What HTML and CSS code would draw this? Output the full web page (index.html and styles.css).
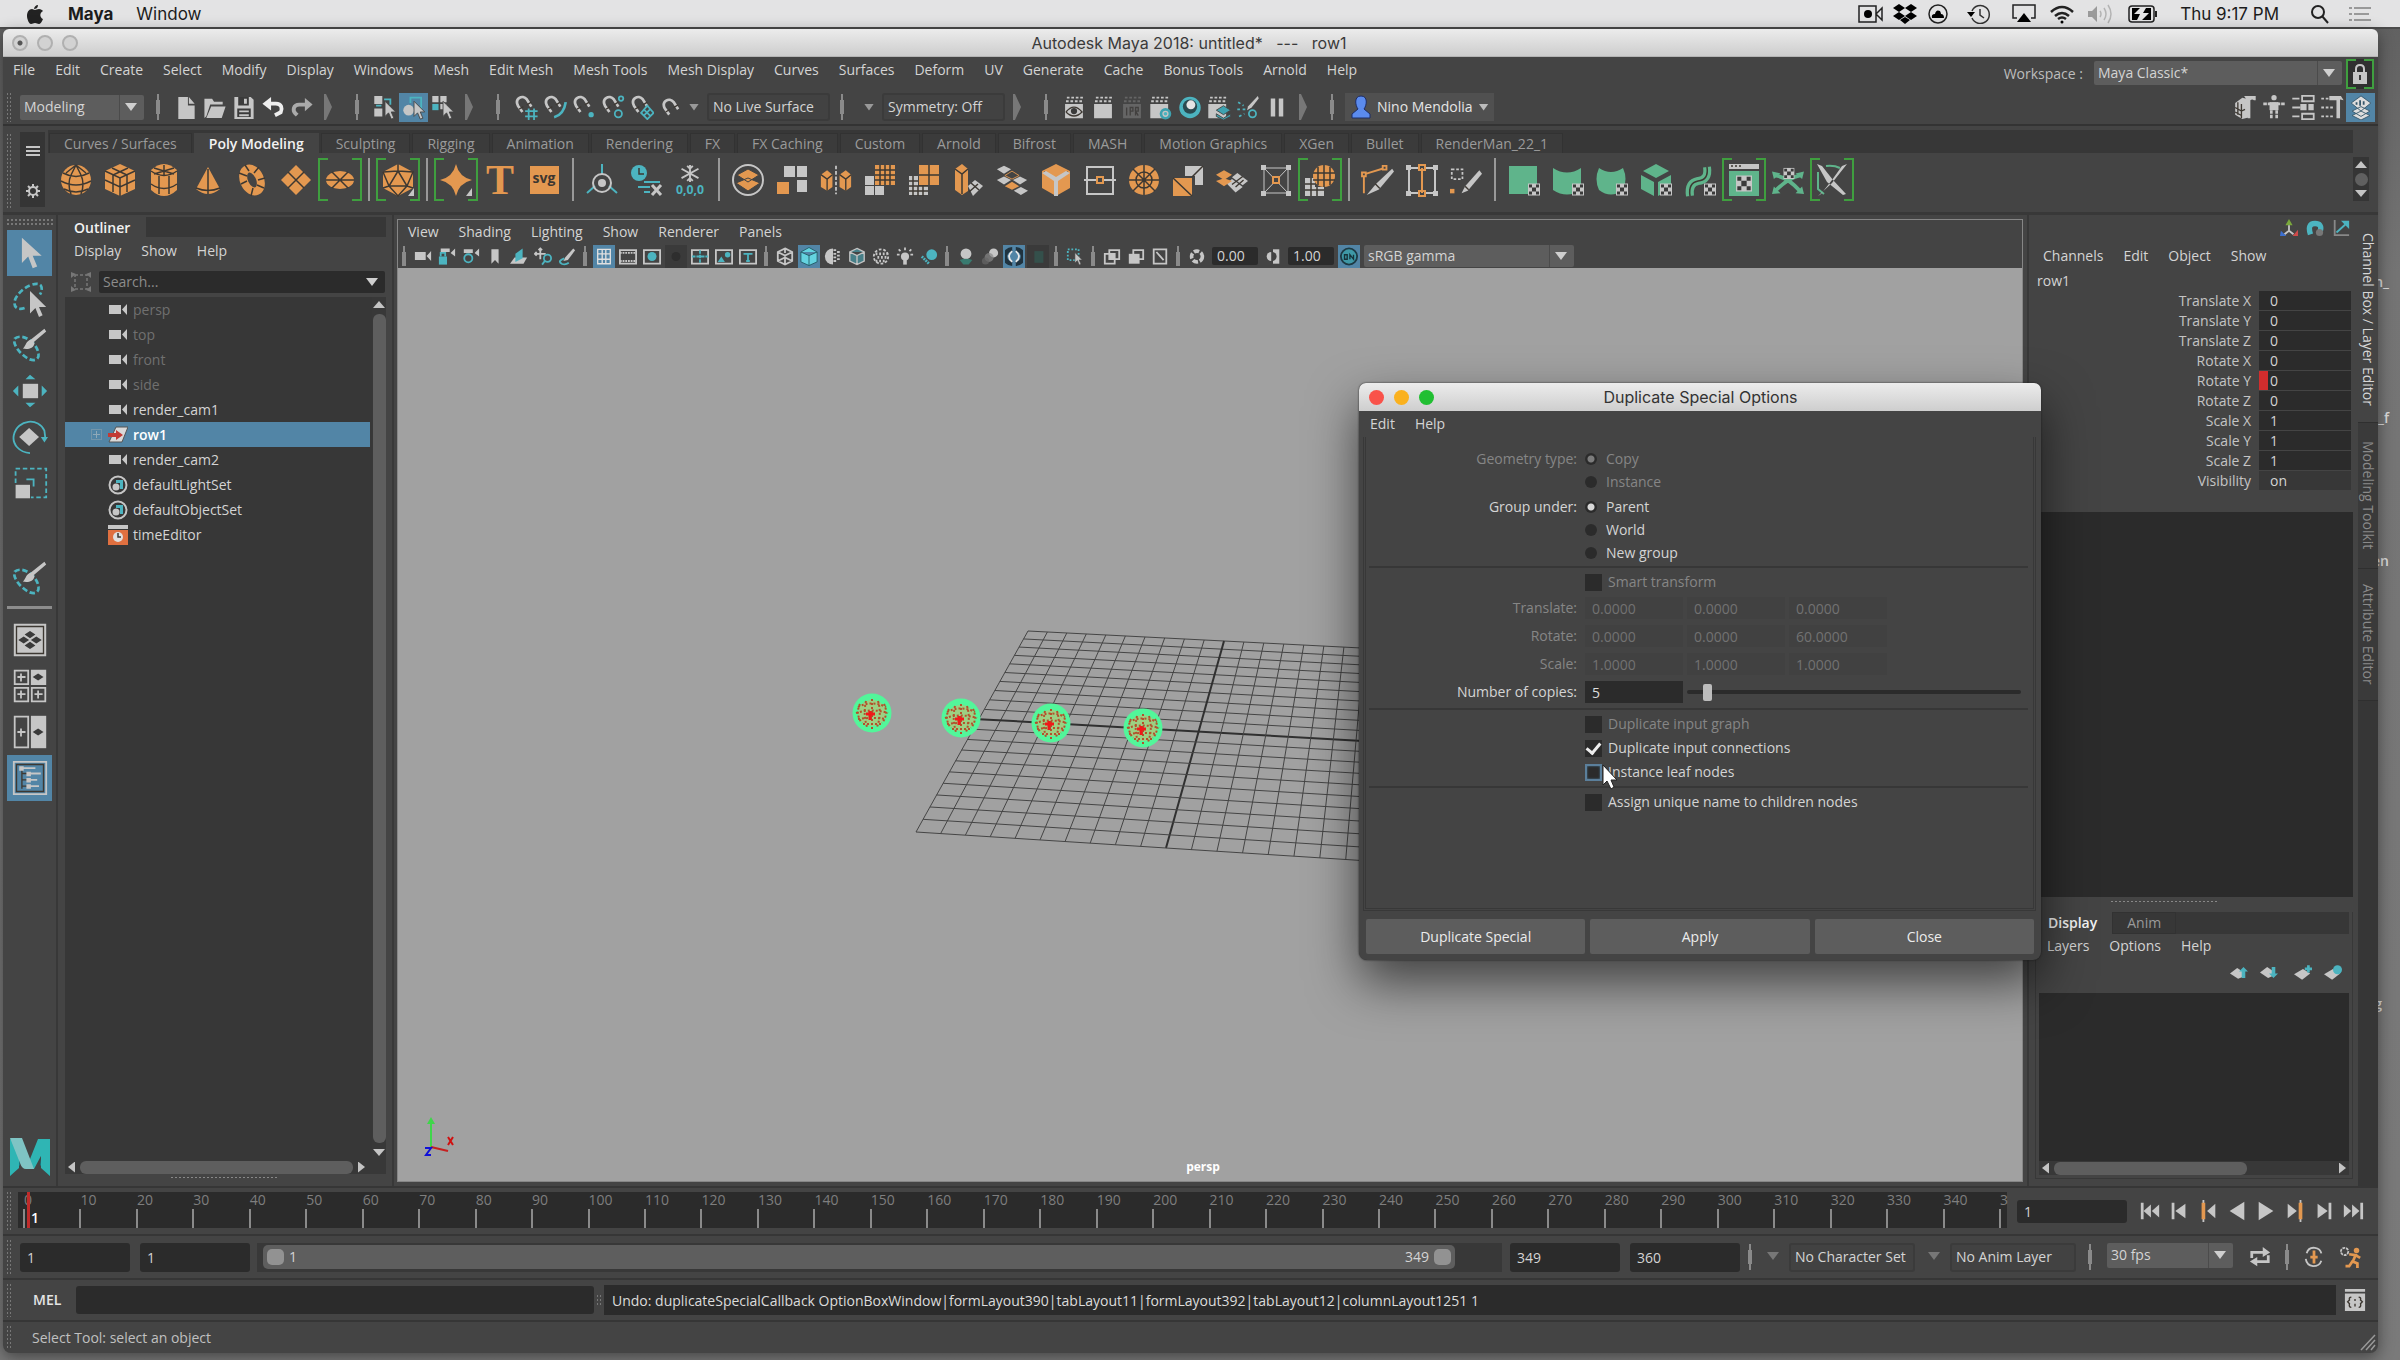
FILE: index.html
```html
<!DOCTYPE html>
<html lang="en">
<head>
<meta charset="utf-8">
<title>Autodesk Maya 2018</title>
<link rel="stylesheet" href="styles.css">
</head>
<body>
<svg class="defs" aria-hidden="true">
  <symbol id="chk" viewBox="0 0 12 12"><path class="fg" d="M0 0h12v12H0z"/><path class="fd" d="M1 1h3v3H1zM8 1h3v3H8zM4 4h4v4H4zM1 8h3v3H1zM8 8h3v3H8z"/></symbol>
  <symbol id="cam" viewBox="0 0 20 20"><path class="fg" d="M1 5h12v9H1zM19 4v11l-5-5.500z"/></symbol>
  <symbol id="set" viewBox="0 0 20 20"><circle class="sg" cx="10" cy="10" r="8.500"/><path class="ft" d="M8 5h7v9h-3V8H8z"/><circle class="fg" cx="8" cy="12" r="3.500"/></symbol>
  <symbol id="clap" viewBox="0 0 22 28"><path class="fg" d="M1 10h20v16H1z"/><path class="sg" stroke-dasharray="3 2" d="M2 7h19M3 3h19"/></symbol>
  <symbol id="mag" viewBox="0 0 26 28"><path class="sg w3" d="M9 19L4 12C0 4 9-1 14 5l5 8"/><path class="sd" d="M5 16l5-3M14 11l5-3"/></symbol>
  <symbol id="ptr" viewBox="0 0 14 22"><path class="fg" stroke="#444" d="M1 1v17l4-4 3 7 3-1-3-7h5z"/></symbol>
  <symbol id="lasso" viewBox="0 0 40 40"><path class="st w3" stroke-dasharray="6 3" d="M3 13c5-5 17-1 23 8 7 11 3 18-6 15C10 32 0 19 3 13z"/><path class="fg" d="M36 2l2 3-14 12-3-3zM22 14l3 4c-1 6-7 7-13 6 4-3 3-9 10-10z"/></symbol>
  <symbol id="ball" viewBox="0 0 40 40"><circle cx="20" cy="20" r="19.500" fill="#52f69a"/><ellipse cx="20" cy="20" rx="14" ry="13" fill="#d8b070" opacity=".55"/><g fill="none" stroke="#b4502c" stroke-width="2" stroke-dasharray="2 2"><path d="M20 6v30M14 8q-3 13 1 26M26 8q4 13-1 26M8 11q-5 10 2 19M32 11q5 10-2 19"/><path d="M6 14q14-7 28 0M4 20q16-5 32 0M6 26q14-2 28 0M11 31h18"/></g><path d="M14 21h9M18 18v9" stroke="#f01818" stroke-width="3"/></symbol>
</svg>

<header class="macbar">
  <svg class="apple" viewBox="0 0 18 20"><path d="M12 1c0 3-2 4-4 4 0-2 2-4 4-4zM9 6c1 0 2-1 4-1 2 0 3 1 4 2-4 2-3 7 0 8-1 3-3 5-4 5-2 0-2-1-4-1s-2 1-4 1C3 20 1 15 1 12c0-4 2-7 5-7 1 0 2 1 3 1z"/></svg>
  <button class="mac-app">Maya</button><button class="mac-menu">Window</button>
  <div class="mac-status">
    <svg viewBox="0 0 26 20" width="26" height="20"><path d="M1 2h17v16H1zM18 10l6-6v12z" fill="none" stroke="#222" stroke-width="1.500"/><circle cx="10" cy="10" r="4"/></svg>
    <svg class="s2" viewBox="0 0 24 20" width="24" height="20"><path d="M6 0l6 4-6 4-6-4zM18 0l6 4-6 4-6-4zM6 8l6 4-6 4-6-4zM18 8l6 4-6 4-6-4zM12 13l5 3-5 4-5-4z"/></svg>
    <svg class="s3" viewBox="0 0 22 20" width="22" height="20"><circle cx="11" cy="10" r="9" fill="none" stroke="#222" stroke-width="1.500"/><path d="M5 14q-1-4 3-4 1-5 5-3 1 2 1 3 3 0 3 4z"/></svg>
    <svg class="s4" viewBox="0 0 24 20" width="24" height="20"><path d="M5 7a9 9 0 1 1 0 7M13 5v6l4 3" fill="none" stroke="#333" stroke-width="1.500"/><path d="M0 8h8l-4 5z"/></svg>
    <svg class="s5" viewBox="0 0 24 20" width="24" height="20"><path d="M5 14H1V1h22v13h-4" fill="none" stroke="#222" stroke-width="1.500"/><path d="M12 9l7 9H5z"/></svg>
    <svg class="s6" viewBox="0 0 26 20" width="26" height="20"><path d="M2 8Q13-2 24 8M6 12q7-6 14 0M9 15q4-3 8 0" fill="none" stroke="#222" stroke-width="2.500"/><circle cx="13" cy="18" r="1.500"/></svg>
    <svg class="s7" viewBox="0 0 26 20" width="26" height="20"><path d="M1 7h4l5-5v16l-5-5H1z" fill="#9a9a9a"/><path d="M13 7q2 3 0 6M17 4q4 6 0 12M21 1q6 9 0 18" fill="none" stroke="#b4b4b4" stroke-width="1.500"/></svg>
    <svg class="s8" viewBox="0 0 30 20" width="30" height="20"><rect x="1" y="2" width="25" height="16" rx="3" fill="none" stroke="#222" stroke-width="1.500"/><path d="M4 4h8l-6 6h6l-3 6H4zM23 16h-9l7-7h-6l3-5h5z"/><path d="M28 7v6" stroke="#222" stroke-width="2"/></svg>
    <span class="clock">Thu 9:17 PM</span>
    <svg class="s9" viewBox="0 0 20 20" width="20" height="20"><circle cx="8" cy="8" r="6" fill="none" stroke="#222" stroke-width="2"/><path d="M12 12l6 7" stroke="#222" stroke-width="2"/></svg>
    <svg class="s10" viewBox="0 0 24 20" width="24" height="20"><path d="M1 4h3M6 4h17M1 10h3M6 10h15M1 16h3M6 16h17" stroke="#999" stroke-width="2"/></svg>
  </div>
</header>

<aside class="desktop-labels"><span class="d1">n_</span><span class="d2">_f</span><span class="d3">en</span><span class="d4">g</span></aside>

<main class="app">
  <div class="titlebar"><i class="light mod"></i><i class="light"></i><i class="light"></i><h1>Autodesk Maya 2018: untitled*&nbsp;&nbsp; ---&nbsp;&nbsp; row1</h1></div>

  <div class="menurow">
    <nav class="menus main-menus"><button>File</button><button>Edit</button><button>Create</button><button>Select</button><button>Modify</button><button>Display</button><button>Windows</button><button>Mesh</button><button>Edit Mesh</button><button>Mesh Tools</button><button>Mesh Display</button><button>Curves</button><button>Surfaces</button><button>Deform</button><button>UV</button><button>Generate</button><button>Cache</button><button>Bonus Tools</button><button>Arnold</button><button>Help</button></nav>
    <label class="ws-label" for="ws">Workspace :</label>
    <span class="sel ws"><select id="ws"><option>Maya Classic*</option></select></span>
    <button class="lock br" aria-label="Lock workspace"><svg viewBox="0 0 16 22" width="16" height="22"><path class="sg" d="M4 10V6q0-4 4-4t4 4v4"/><path class="fg" d="M1 9h14v12H1z"/><path class="fd" d="M7 12h2v5H7z"/></svg></button>
  </div>

  <div class="statusline">
    <i class="grip"></i>
    <span class="sel mode"><select aria-label="Menu set"><option>Modeling</option></select></span>
    <i class="vs"></i>
    <button class="ib" aria-label="New"><svg viewBox="0 0 22 26"><path class="fg" d="M3 2h10v9h7v14H3zM14 2l6 7h-6z"/></svg></button>
    <button class="ib" aria-label="Open"><svg viewBox="0 0 24 26"><path class="fg" d="M1 24V4h8l2 3h9v3H7L3 22zM8 12h15l-4 12H3z"/></svg></button>
    <button class="ib" aria-label="Save"><svg viewBox="0 0 22 26"><path class="fg" d="M1 2h17l3 3v20H1z"/><path class="fd" d="M5 2h11v9H5zM4 14h14v9H4z"/><path class="fg" d="M11 4h3v5h-3zM6 16h10v2H6zM6 20h10v2H6z"/></svg></button>
    <button class="ib" aria-label="Undo"><svg viewBox="0 0 24 26"><path fill="none" stroke="#eee" stroke-width="4" d="M6 9h9c6 0 7 5 5 9l-6 3"/><path fill="#eee" d="M10 2v14L1 9z"/></svg></button>
    <button class="ib" aria-label="Redo"><svg viewBox="0 0 24 26"><path fill="none" stroke="#aaa" stroke-width="4" d="M18 10H9c-6 0-7 6-4 9l2 2"/><path fill="#aaa" d="M15 3v14l8-7z"/></svg></button>
    <i class="gt"></i><i class="vs"></i>
    <button class="ib" aria-label="Select hierarchy"><svg viewBox="0 0 26 28"><path class="fg" d="M1 1h9v9H1zM1 15h9v9H1z"/><path class="st" d="M12 5h7v6M3 12h6"/><use href="#ptr" x="12" y="6" width="14" height="22"/></svg></button>
    <button class="ib on" aria-label="Select object"><svg viewBox="0 0 26 28"><circle class="fg" cx="7" cy="17" r="6"/><path class="st" d="M9 9V3h12v13"/><use href="#ptr" x="12" y="6" width="14" height="22"/></svg></button>
    <button class="ib" aria-label="Select component"><svg viewBox="0 0 26 28"><path class="fg" d="M1 1h7v7H1zM10 1h7v7h-7zM10 10h7v6h-7z"/><path class="ft" d="M1 10h7v7H1z"/><use href="#ptr" x="12" y="6" width="14" height="22"/></svg></button>
    <i class="gt"></i><i class="vs"></i>
    <button class="ib" aria-label="Snap to grid"><svg viewBox="0 0 26 28"><use href="#mag"/><path class="st" d="M16 15v13M22 15v13M12 18h14M12 24h14"/></svg></button>
    <button class="ib" aria-label="Snap to curve"><svg viewBox="0 0 26 28"><use href="#mag"/><path class="st w3" d="M25 8q-2 14-13 17"/></svg></button>
    <button class="ib" aria-label="Snap to point"><svg viewBox="0 0 26 28"><use href="#mag"/><circle class="ft" cx="21" cy="22" r="3"/></svg></button>
    <button class="ib" aria-label="Snap to center"><svg viewBox="0 0 26 28"><use href="#mag"/><circle class="st" cx="19" cy="21" r="4"/><circle class="st" cx="22" cy="4" r="2.500"/></svg></button>
    <button class="ib" aria-label="Snap to plane"><svg viewBox="0 0 26 28"><use href="#mag"/><path class="st" d="M19 12l7 8-7 7-7-7zM15 16l7 7M22 16l-7 7"/></svg></button>
    <button class="ib" aria-label="Make live"><svg viewBox="0 0 26 28"><use href="#mag" x="2" y="3"/></svg></button>
    <i class="tri"></i>
    <button class="box live">No Live Surface</button>
    <i class="vs"></i><i class="tri sp"></i>
    <button class="box sym">Symmetry: Off</button>
    <i class="gt"></i><i class="vs"></i>
    <button class="ib" aria-label="Render view"><svg viewBox="0 0 22 28"><use href="#clap"/><path class="sd" d="M2 19q9-11 18 0-9 9-18 0"/><circle class="fd" cx="11" cy="18" r="3.500"/></svg></button>
    <button class="ib" aria-label="Render frame"><svg viewBox="0 0 22 28"><use href="#clap"/></svg></button>
    <button class="ib dim" aria-label="IPR render"><svg viewBox="0 0 22 28"><use href="#clap"/><path class="sd" d="M5 14v9M9 23v-9h3v4H9M15 23v-9h3v4h-3l3 5"/></svg></button>
    <button class="ib" aria-label="Render settings"><svg viewBox="0 0 26 28"><use href="#clap" x="-2"/><circle cx="18" cy="21" r="5" fill="#c4c4c4" stroke="#3ea2b0" stroke-width="3"/><circle class="ft" cx="18" cy="21" r="2"/></svg></button>
    <button class="ib" aria-label="Hypershade"><svg viewBox="0 0 26 28"><circle class="ft" cx="13" cy="14" r="12"/><circle cx="13" cy="13" r="8" fill="#2b4a50"/><circle cx="14" cy="11" r="5" fill="#e4e4e4"/></svg></button>
    <button class="ib" aria-label="Render setup"><svg viewBox="0 0 26 28"><use href="#clap" x="-2"/><path fill="#3ea2b0" stroke="#444" d="M18 12l8 5-8 5-8-5zM10 21l8 5 8-5v3l-8 4-8-4z"/></svg></button>
    <button class="ib" aria-label="Light editor"><svg viewBox="0 0 26 28"><path class="fg" d="M24 1l1 3-8 10-5 3 1-4z"/><circle class="st" cx="18" cy="21" r="4"/><path class="st" stroke-dasharray="3 3" d="M2 8l6 4M1 16h9M3 24l6-3"/></svg></button>
    <button class="ib" aria-label="Pause"><svg viewBox="0 0 22 28"><path class="fg" d="M4 4h5v20H4zM13 4h5v20h-5z"/></svg></button>
    <i class="gt"></i><i class="vs"></i>
    <button class="user"><svg viewBox="0 0 20 24" width="20" height="24"><path fill="#5b8bee" stroke="#1d2c66" d="M10 1c7 0 6 9 3 13l6 5v4H1v-4l6-5C4 10 3 1 10 1z"/></svg>Nino Mendolia<i class="tri"></i></button>
    <div class="right-tools">
      <button class="ib" aria-label="Modeling toolkit"><svg viewBox="0 0 26 28"><path class="fg" d="M2 9l8-6 8 2v20l-8 2-8-5zM12 1h13v5h-2q-2-2-4 0v20h-3V7z"/><path class="sd" d="M2 14l7 4 4-2M2 19l7 4M9 10v16M5 8v14"/></svg></button>
      <button class="ib" aria-label="Human IK"><svg viewBox="0 0 26 28"><circle class="fg" cx="13" cy="3" r="3"/><path class="fg" d="M8 8h10v9H8z"/><path class="sg w3" stroke-dasharray="4 1" d="M1 10h24M10 17v10M16 17v10"/></svg></button>
      <button class="ib" aria-label="Attribute editor"><svg viewBox="0 0 26 28"><path class="sg" d="M12 1h13v6H12zM12 21h13v6H12zM1 4h8M1 14h9M1 24h8"/><path class="fg" d="M10 10h7v7h-7zM19 10h6v7h-6z"/></svg></button>
      <button class="ib" aria-label="Tool settings"><svg viewBox="0 0 26 28"><path class="fg" d="M10 1h13l3 5-4-1v21h-4V6h-8z"/><path class="sg" stroke-dasharray="3 2" d="M1 4h8M1 14h13M1 24h13"/></svg></button>
      <button class="ib on" aria-label="Channel box"><svg viewBox="0 0 26 28"><path fill="#ddd" stroke="#35566b" d="M13 18L3 23l10 5 10-5zM13 13L3 18l10 6 10-6zM13 1L2 9l11 9 11-9z"/><path stroke="#35566b" stroke-width="2" d="M8 8v3M12 6v6M16 7v4"/></svg></button>
    </div>
  </div>

  <div class="shelf">
    <i class="grip tall"></i>
    <div class="shelf-side"><svg viewBox="0 0 14 10" width="14" height="10"><path class="sg" d="M0 1h14M0 5h14M0 9h14"/></svg><svg viewBox="0 0 14 14" width="14" height="14"><circle class="sg" cx="7" cy="7" r="4"/><path class="sg" d="M7 0v3M7 11v3M0 7h3M11 7h3M2 2l2 2M10 10l2 2M12 2l-2 2M4 10l-2 2"/></svg></div>
    <div class="shelf-main">
      <nav class="shelf-tabs"><button>Curves / Surfaces</button><button class="cur">Poly Modeling</button><button>Sculpting</button><button>Rigging</button><button>Animation</button><button>Rendering</button><button>FX</button><button>FX Caching</button><button>Custom</button><button>Arnold</button><button>Bifrost</button><button>MASH</button><button>Motion Graphics</button><button>XGen</button><button>Bullet</button><button>RenderMan_22_1</button></nav>
      <div class="shelf-icons">
        <button aria-label="Sphere"><svg viewBox="0 0 32 32"><circle class="fo" cx="16" cy="16" r="15"/><path class="sd" d="M3 9q13 7 26 0M1 17q15 8 30 0M4 25q12 6 24 0M11 11q-4 9 0 19M21 11q4 9 0 19M16 1L6 9M16 1l10 8M16 1l-5 10M16 1l5 10"/></svg></button>
        <button aria-label="Cube"><svg viewBox="0 0 32 32"><path class="fo" d="M16 0l15 7v18l-15 7-15-7V7z"/><path class="sd" d="M1 7l15 7 15-7M16 14v18M8 4l15 7v17M24 4L9 11v17M1 16l15 7 15-7"/></svg></button>
        <button aria-label="Cylinder"><svg viewBox="0 0 32 32"><path class="fo" d="M3 6q13-12 26 0v20q-13 12-26 0z"/><path class="sd" d="M3 7q13 9 26 0M3 20q13 9 26 0M11 12v18M21 12v18M16 1v10M6 4l20 6M26 4L6 10"/></svg></button>
        <button aria-label="Cone"><svg viewBox="0 0 32 32"><path class="fo" d="M16 3l12 22q-12 10-24 0z"/><path class="sd" d="M16 5v25M4 24q12 5 24 0"/></svg></button>
        <button aria-label="Torus"><svg viewBox="0 0 32 32"><ellipse class="so w8" cx="16" cy="16" rx="8" ry="12" transform="rotate(-25 16 16)"/><path class="sd" d="M3 9l8 3M5 20l6-3M15 32l2-8M28 24l-7-3M18 9l5-6M22 16l7-2M9 1l4 6"/></svg></button>
        <button aria-label="Plane"><svg viewBox="0 0 32 32"><path class="fo" d="M16 1l15 15-15 15L1 16z"/><path class="sd" d="M8 8l16 16M24 8L8 24"/></svg></button>
        <button class="br" aria-label="Disc"><svg viewBox="0 0 32 32"><ellipse class="fo" cx="16" cy="16" rx="14" ry="9"/><path class="sd" d="M2 16h28M8 8l16 16M24 8L8 24"/></svg></button>
        <i class="bar"></i>
        <button class="br" aria-label="Platonic solid"><svg viewBox="0 0 32 32"><path class="fo" d="M16 0l15 8v16l-15 8-15-8V8z"/><path class="sd" d="M16 7l9 15H7zM16 0v7M1 8l15-1 15 1-6 14 6 2M1 8l6 14-6 2M7 22l9 10 9-10"/><path class="fg" d="M32 24v8h-6z"/></svg></button>
        <i class="bar"></i>
        <button class="br" aria-label="Super shapes"><svg viewBox="0 0 32 32"><path class="fo" d="M16 0q3 13 16 16-13 3-16 16-3-13-16-16Q13 13 16 0z"/><path class="fg" d="M32 24v8h-6z"/></svg></button>
        <button class="tee" aria-label="Type">T</button>
        <button aria-label="SVG"><span class="svgchip">svg</span></button>
        <i class="bar"></i>
        <button aria-label="Pivot"><svg viewBox="0 0 32 32"><path class="st" d="M16 0v10M9 22l-8 7M23 22l8 7"/><circle class="sg" cx="16" cy="19" r="9"/><circle class="fg" cx="16" cy="19" r="4"/></svg></button>
        <button aria-label="Delete history"><svg viewBox="0 0 32 32"><circle class="ft" cx="9" cy="9" r="8"/><path class="sd" d="M9 4v6h5"/><path class="st" d="M14 18h16M8 23h12M14 28h6"/><path class="sg w3" d="M22 21l9 10M31 21l-9 10"/></svg></button>
        <button aria-label="Freeze"><svg viewBox="0 0 34 32"><path class="sg" d="M17 0v18M8 4l18 10M26 4L8 14M14 1l3 3 3-3M14 17l3-3 3 3"/><text class="tinyt" x="17" y="31" text-anchor="middle">0,0,0</text></svg></button>
        <i class="bar"></i>
        <button aria-label="Combine"><svg viewBox="0 0 32 32"><circle class="sg" cx="16" cy="16" r="15"/><path class="fo" stroke="#444" d="M16 14l12 5-12 8-12-8zM16 5l11 6-11 7-11-7z"/></svg></button>
        <button aria-label="Separate"><svg viewBox="0 0 32 32"><path class="fg" d="M8 2h11v11H8zM21 2h10v11H21zM21 16h10v12H21z"/><path class="fo" d="M1 18h12v12H1z"/></svg></button>
        <button aria-label="Mirror"><svg viewBox="0 0 36 32"><path class="fo" d="M1 10l7-5 6 5v14l-6 4-7-4zM22 10l7-5 6 5v14l-6 4-7-4z"/><path class="sd" d="M1 10l7 5 6-5M8 15v13M22 10l7 5 6-5M29 15v13"/><path class="sg" stroke-dasharray="4 2" d="M18 0v32"/></svg></button>
        <button aria-label="Smooth"><svg viewBox="0 0 32 32"><path class="fg" d="M1 12h9v9H1zM1 22h9v9H1zM11 22h9v9h-9z"/><path class="fo" d="M11 1h20v20H11z"/><path class="sd" d="M16 1v20M21 1v20M26 1v20M11 6h20M11 11h20M11 16h20"/></svg></button>
        <button aria-label="Reduce"><svg viewBox="0 0 32 32"><path class="fo" d="M11 1h20v20H11z"/><path class="sd" d="M21 1v20M11 11h20"/><path class="fg" d="M1 12h9v10h10v9H1z"/><path class="sd" d="M5 12v20M1 17h9M1 22h19M1 27h19M10 22v10M15 22v10"/></svg></button>
        <button aria-label="Extrude"><svg viewBox="0 0 32 32"><path class="fo" d="M3 5l7-5 6 5v22l-6 4-7-5z"/><path class="sd" d="M3 5l7 5 6-5M10 10v20"/><path class="fg" d="M16 22l7-6 8 6-10 10z"/><path class="sd" d="M19 19l8 7M26 20l-9 8"/></svg></button>
        <button aria-label="Bridge"><svg viewBox="0 0 36 32"><path class="fg" d="M9 0l8 4-8 5-8-5zM9 12l8 4-8 5-8-5zM27 12l8 4-8 5-8-5zM28 24l8 4-8 5-8-5z"/><path class="so w1" d="M18 6l8 5-8 4-8-4z"/><path class="fo" d="M18 18l8 5-8 4-8-4z"/></svg></button>
        <button aria-label="Bevel"><svg viewBox="0 0 32 32"><path class="fo" d="M16 0l14 7v17l-14 8-14-8V7z"/><path class="sd" d="M4 8l12 7 12-7M16 15v17"/><path class="fg" d="M2 9l4-2 10 6 10-6 4 2-12 8v15h-4V17z"/></svg></button>
        <button aria-label="Collapse"><svg viewBox="0 0 32 32"><path class="sg" d="M3 3h26v27H3zM0 16h32"/><path class="box6" d="M13 13h6v6h-6z"/></svg></button>
        <button aria-label="Circularize"><svg viewBox="0 0 32 32"><circle class="fo" cx="16" cy="16" r="15"/><circle class="sd" cx="16" cy="16" r="8"/><path class="sd" d="M16 1v30M1 16h30M5 5l22 22M27 5L5 27"/></svg></button>
        <button aria-label="Extract"><svg viewBox="0 0 32 32"><path class="fg" d="M13 2h18v19h-8v-9H13z"/><path class="fo" d="M1 14h19v18H1z"/><path class="sd" d="M1 14l19 18M20 13L31 2"/></svg></button>
        <button aria-label="Slice"><svg viewBox="0 0 36 32"><path class="fg" d="M18 13l6-5 12 9-6 5zM12 20l6-5 12 9-8 6z"/><path class="fo" d="M9 5l9 5-9 6-9-6zM9 14l9 3-9 6-9-6z"/><path class="sd" d="M18 21l12-9M22 24l9-8"/></svg></button>
        <button aria-label="Poke"><svg viewBox="0 0 32 32"><path class="sg w1" d="M4 4h24v25H4zM4 4l24 25M28 4L4 29"/><path class="box6" d="M13 13h6v6h-6z"/><path class="fg" d="M1 1h5v5H1zM26 1h5v5h-5zM1 27h5v5H1zM26 27h5v5h-5z"/></svg></button>
        <button class="br" aria-label="Remesh"><svg viewBox="0 0 32 32"><path class="fg" d="M1 14h10v9h9v9H1z"/><path class="sd" d="M7 14v18M13 23v9M1 20h10M1 26h19"/><circle class="fo" cx="20" cy="12" r="11"/><path class="sd" d="M20 1v22M14 3v18M26 3v18M9 9h22M9 16h22"/></svg></button>
        <i class="bar"></i>
        <button aria-label="Multi-cut"><svg viewBox="0 0 34 32"><path class="so" d="M2 30V10L25 3"/><path class="fg" d="M32 4l2 3-16 19-13 6 10-12z"/><path class="sd" d="M14 20l5 5"/><path class="box6" d="M0 8h4v4H0zM22 1h4v4h-4z"/></svg></button>
        <button aria-label="Connect"><svg viewBox="0 0 32 32"><path class="sg" d="M3 4h26v25H3z"/><path class="box6" d="M16 4v25M13 1h6v5h-6zM13 27h6v5h-6z"/><path class="fg" d="M0 1h5v5H0zM27 1h5v5h-5zM0 27h5v5H0zM27 27h5v5h-5z"/></svg></button>
        <button aria-label="Quad draw"><svg viewBox="0 0 36 32"><path class="sg" stroke-dasharray="3 2" d="M2 4h12v11H2z"/><path class="fg" d="M33 5l3 4-16 19-7 3 4-8z"/><path class="sd" d="M17 23l4 4"/><path class="fo" d="M0 26h5v5H0z"/></svg></button>
        <i class="bar"></i>
        <button aria-label="Planar map"><svg viewBox="0 0 32 32"><path class="fe" d="M1 2h28v28H1z"/><use href="#chk" x="20" y="19" width="12" height="13"/></svg></button>
        <button aria-label="Cylindrical map"><svg viewBox="0 0 32 32"><path class="fe" d="M1 4q14 9 28 0v22q-14 9-28 0z"/><use href="#chk" x="20" y="19" width="12" height="13"/></svg></button>
        <button aria-label="Spherical map"><svg viewBox="0 0 32 32"><path class="fe" d="M3 4q12 8 24 0 5 11 0 22-12 9-24 0-5-11 0-22z"/><use href="#chk" x="20" y="19" width="12" height="13"/></svg></button>
        <button aria-label="Automatic map"><svg viewBox="0 0 32 32"><path class="fe" d="M16 0l13 7-13 7L3 7zM1 11l13 7v14L1 25zM31 11l-13 7v14l13-7z"/><use href="#chk" x="20" y="19" width="12" height="13"/></svg></button>
        <button aria-label="Contour stretch"><svg viewBox="0 0 32 32"><path class="se w8" d="M6 32q-2-13 8-15 11-1 9-14"/><path class="sd" d="M6 32q-2-13 8-15 11-1 9-14"/><use href="#chk" x="20" y="19" width="12" height="13"/></svg></button>
        <button class="br" aria-label="UV editor"><svg viewBox="0 0 32 32"><path class="fg" d="M1 0h30v5H1z"/><path class="fe" d="M1 7h30v25H1z"/><use href="#chk" x="8" y="11" width="16" height="17"/><path class="sd" stroke-dasharray="2 2" d="M3 2h10"/></svg></button>
        <button aria-label="Unfold"><svg viewBox="0 0 34 32"><path class="se w4" d="M3 11q14 2 27 17M30 11Q18 13 3 28"/><path class="fe" d="M0 7l9 2-7 6zM34 7l-9 2 7 6zM0 31l9-1-7-7zM34 31l-9-1 7-7z"/><use href="#chk" x="12" y="3" width="12" height="12"/></svg></button>
        <button class="br" aria-label="Cut and sew"><svg viewBox="0 0 32 32"><path class="se" d="M2 8v17l6 5M10 2q8-1 14 2"/><path class="fg" d="M1 0l5 2 11 14 13 14-3 1-16-13zM31 0l-5 2-10 14L5 30l-3 2 14-13z"/></svg></button>
      </div>
    </div>
    <div class="shelf-scroll"><i class="au"></i><i class="knob"></i><i class="ad"></i></div>
  </div>

  <div class="work">
    <div class="toolbox">
      <i class="hgrip"></i>
      <button class="tb on" aria-label="Select tool"><svg viewBox="0 0 40 40"><path class="fg" d="M11 3v28l7-7 5 13 5-2-5-12h10z"/></svg></button>
      <button class="tb" aria-label="Lasso tool"><svg viewBox="0 0 40 40"><path class="st w3" stroke-dasharray="6 3" d="M14 30C2 34 0 24 6 16 13 6 28 0 32 5c2 3 1 7-1 10"/><path class="fg" d="M20 11v25l6-6 4 10 4-2-4-9h8z"/></svg></button>
      <button class="tb" aria-label="Paint select tool"><svg viewBox="0 0 40 40"><use href="#lasso"/></svg></button>
      <button class="tb" aria-label="Move tool"><svg viewBox="0 0 40 40"><path class="fg" d="M12 12h17v16H12z"/><path class="ft" d="M20 2l6 5H15zM20 38l6-5H15zM1 20l6-6v12zM39 20l-6-6v12z"/></svg></button>
      <button class="tb" aria-label="Rotate tool"><svg viewBox="0 0 40 40"><path class="st" d="M20 38C8 37 0 28 2 18 6 0 30-2 36 13l1 8"/><path class="ft" d="M32 20h8l-4 6z"/><path class="fg" d="M19 10l11 10-11 10L8 20z"/></svg></button>
      <button class="tb" aria-label="Scale tool"><svg viewBox="0 0 40 40"><path class="st" stroke-dasharray="5 3" d="M4 20V4h34v32H21"/><path class="fg" d="M4 22h16v15H4z"/><path class="st" d="M16 16h8v8"/></svg></button>
      <i class="tgap"></i>
      <button class="tb" aria-label="Last tool"><svg viewBox="0 0 40 40"><use href="#lasso"/></svg></button>
      <i class="tline"></i>
      <button class="tb" aria-label="Single view"><svg viewBox="0 0 40 40"><path class="fg" d="M2 2h36v36H2z"/><path class="sd" d="M5 5h30v30H5z"/><path class="fd" d="M20 10l6 4-6 4-6-4zM20 22l6 4-6 4-6-4zM13 16l6 4-6 4-6-4zM27 16l6 4-6 4-6-4z"/></svg></button>
      <button class="tb" aria-label="Four view"><svg viewBox="0 0 40 40"><path class="sg" d="M3 3h15v15H3zM22 3h15v15H22zM3 22h15v15H3zM22 22h15v15H22zM6 10h9M10 6v9M6 29h9M10 25v9M25 29h9M29 25v9"/><path class="fg" d="M22 3h15v15H22z"/><path class="fd" d="M29 6l6 4-6 4-6-4z"/></svg></button>
      <button class="tb" aria-label="Two view"><svg viewBox="0 0 40 40"><path class="sg" d="M3 3h15v34H3zM6 20h9M10 16v9"/><path class="fg" d="M21 2h17v36H21z"/><path class="fd" d="M29 16l6 4-6 4-6-4z"/></svg></button>
      <button class="tb on" aria-label="Outliner view"><svg viewBox="0 0 40 40"><path class="sg" d="M2 2h36v36H2z"/><path class="sd" d="M5 5h30v30H5zM11 9v23M11 15h8M11 22h8M11 29h8"/><path class="sg" d="M12 9h14M18 15h14M18 22h10M18 29h12"/><path class="fg" d="M8 7h5v5H8zM16 13h5v5h-5zM16 20h5v5h-5zM16 27h5v5h-5z"/></svg></button>
      <svg class="mlogo" viewBox="0 0 40 38" width="40" height="38"><path fill="#127f88" d="M0 2l8 6 2 19-10 11zM40 2l-7 6-3 19 10 11z"/><path fill="#2fb5b4" d="M0 38l9-8V8L0 1zM28 1h12L24 31h-8zM31 12l9-11v37l-9-8z"/><path fill="#7fc4c4" d="M0 0h12l12 31h-8q-4 0-6-6z"/></svg>
    </div>

    <section class="outliner">
      <div class="ptab"><button class="cur">Outliner</button></div>
      <nav class="menus out-menus"><button>Display</button><button>Show</button><button>Help</button></nav>
      <div class="searchrow"><svg viewBox="0 0 20 20" width="20" height="20"><path fill="none" stroke="#777" stroke-width="1.500" stroke-dasharray="3 2" d="M4 3h12v14H4z"/><path fill="#777" d="M0 0l5 2-5 4zM20 0l-5 2 5 4zM0 20l5-2-5-4zM20 20l-5-2 5-4z"/></svg><span class="sel search"><input type="text" placeholder="Search..." aria-label="Search"></span></div>
      <div class="treewrap">
        <ul class="tree">
          <li class="dimmed"><svg><use href="#cam"/></svg>persp</li>
          <li class="dimmed"><svg><use href="#cam"/></svg>top</li>
          <li class="dimmed"><svg><use href="#cam"/></svg>front</li>
          <li class="dimmed"><svg><use href="#cam"/></svg>side</li>
          <li><svg><use href="#cam"/></svg>render_cam1</li>
          <li class="picked"><i class="plus"></i><svg viewBox="0 0 20 20"><path fill="#d9d9d9" stroke="#555" d="M8 2h12l-6 15H1z"/><path fill="#c23a34" d="M0 8h8V5l7 5-7 5v-3H0z"/></svg>row1</li>
          <li><svg><use href="#cam"/></svg>render_cam2</li>
          <li><svg><use href="#set"/></svg>defaultLightSet</li>
          <li><svg><use href="#set"/></svg>defaultObjectSet</li>
          <li><svg viewBox="0 0 20 20"><path class="fg" d="M0 0h20v4H0z"/><path fill="#e07040" d="M0 5h20v15H0z"/><circle cx="10" cy="12" r="5" fill="#e0e0e0"/><path class="sd" d="M10 8v4h3"/></svg>timeEditor</li>
        </ul>
        <div class="vscroll"><i class="au"></i><i class="thumb"></i><i class="ad"></i></div>
      </div>
      <div class="hscroll"><i class="al"></i><i class="thumb"></i><i class="ar"></i></div>
      <i class="dots"></i>
    </section>

    <section class="viewport">
      <nav class="menus view-menus"><button>View</button><button>Shading</button><button>Lighting</button><button>Show</button><button>Renderer</button><button>Panels</button></nav>
      <div class="viewbar">
        <i class="vs"></i>
        <button class="vb" aria-label="Camera"><svg><use href="#cam"/></svg></button>
        <button class="vb" aria-label="Lock camera"><svg viewBox="0 0 20 20"><path class="fg" d="M3 1h10v4H3zM19 1v9l-5-4z"/><path class="ft" d="M1 10h9v9H1z"/><path class="st" d="M3 10V6h5v4"/></svg></button>
        <button class="vb" aria-label="Camera attributes"><svg viewBox="0 0 20 20"><path class="fg" d="M2 2h10v4H2zM19 1v9l-5-4z"/><circle class="st" cx="7" cy="12" r="4.500"/></svg></button>
        <button class="vb" aria-label="Bookmark"><svg viewBox="0 0 20 20"><path class="fg" d="M6 2h8v16l-4-4-4 4z"/></svg></button>
        <button class="vb" aria-label="Image plane"><svg viewBox="0 0 20 20"><path class="fg" d="M0 18l5-7h14l-4 7z"/><path class="ft" d="M6 7l8-6v11l-8 4z"/></svg></button>
        <button class="vb" aria-label="2D pan"><svg viewBox="0 0 20 20"><path class="sg" d="M1 7h12M7 1v12M5 3l2-2 2 2M3 5L1 7l2 2"/><circle class="st" cx="15" cy="12" r="4"/><path class="st" d="M12 15l-3 4"/></svg></button>
        <button class="vb" aria-label="Grease pencil"><svg viewBox="0 0 20 20"><path class="fg" d="M17 1l2 2-8 11-5 1 2-4z"/><path class="st" d="M7 12q-8 3-3 6 4 2 8-1"/></svg></button>
        <i class="vs"></i>
        <button class="vb on" aria-label="Grid"><svg viewBox="0 0 20 20"><path fill="none" stroke="#e0e0e0" stroke-width="1.500" d="M3 2h14v16H3zM8 2v16M12 2v16M3 7h14M3 13h14"/></svg></button>
        <button class="vb" aria-label="Film gate"><svg viewBox="0 0 20 20"><path class="sg" d="M1 3h18v15H1z"/><path class="sg" stroke-dasharray="2 1" d="M1 6h18M1 15h18"/></svg></button>
        <button class="vb" aria-label="Resolution gate"><svg viewBox="0 0 20 20"><path class="sg" d="M1 3h18v15H1z"/><circle class="ft" cx="10" cy="10" r="5"/></svg></button>
        <button class="vb dk" aria-label="Gate mask"><svg viewBox="0 0 20 20"><circle cx="10" cy="10" r="5" fill="#2e2e2e"/></svg></button>
        <button class="vb" aria-label="Field chart"><svg viewBox="0 0 20 20"><path class="sg" d="M1 3h18v15H1z"/><path class="st" stroke-dasharray="4 1" d="M1 10h18M10 3v15"/></svg></button>
        <button class="vb" aria-label="Safe action"><svg viewBox="0 0 20 20"><path class="sg" d="M1 3h18v15H1z"/><circle class="ft" cx="14" cy="8" r="3"/><path class="ft" d="M3 16l4-6 4 6z"/></svg></button>
        <button class="vb" aria-label="Safe title"><svg viewBox="0 0 20 20"><path class="sg" d="M1 3h18v15H1z"/><path class="st" d="M5 7h10M10 7v8M8 15h4"/></svg></button>
        <i class="vs"></i>
        <button class="vb" aria-label="Wireframe"><svg viewBox="0 0 20 20"><path class="sg" d="M10 1l8 4v10l-8 4-8-4V5zM2 5l8 4 8-4M10 9v10M10 1v5M2 15l8-4 8 4"/></svg></button>
        <button class="vb on" aria-label="Shaded"><svg viewBox="0 0 20 20"><path fill="#64d3e0" stroke="#235a64" d="M10 0l9 5v11l-9 4-9-4V5zM1 5l9 4 9-4M10 9v11"/></svg></button>
        <button class="vb" aria-label="Default material"><svg viewBox="0 0 20 20"><path class="fg" d="M10 1a9 9 0 0 0 0 18z"/><path class="sg w3" stroke-dasharray="2 2" d="M12 2v16M16 4v12"/></svg></button>
        <button class="vb" aria-label="Textured wire"><svg viewBox="0 0 20 20"><path fill="#477f88" stroke="#c4c4c4" stroke-width="1.500" d="M10 1l8 4v10l-8 4-8-4V5zM2 5l8 4 8-4M10 9v10"/></svg></button>
        <button class="vb" aria-label="Textured"><svg viewBox="0 0 20 20"><circle class="sg" stroke-dasharray="3 2" cx="10" cy="10" r="8"/><path class="sg w3" stroke-dasharray="2 2" d="M4 7h13M6 11h12M4 15h12"/></svg></button>
        <button class="vb" aria-label="Use all lights"><svg viewBox="0 0 20 20"><circle class="fg" cx="10" cy="10" r="4.500"/><path class="fg" d="M8 13h4v6H8z"/><path class="sg" d="M10 0v3M1 8h3M16 8h3M3 2l2 2M17 2l-2 2"/></svg></button>
        <button class="vb" aria-label="Shadows"><svg viewBox="0 0 20 20"><circle class="ft" cx="13" cy="8" r="6"/><path class="st w3" stroke-dasharray="2 1" d="M2 10l8 8"/></svg></button>
        <i class="vs"></i>
        <button class="vb" aria-label="Ambient occlusion"><svg viewBox="0 0 20 20"><circle class="fg" cx="10" cy="7" r="6"/><path fill="#397b70" d="M3 14q7-3 14 0l-4 5H7z"/></svg></button>
        <button class="vb" aria-label="Motion blur"><svg viewBox="0 0 20 20"><circle class="fg" cx="14" cy="6" r="5"/><circle cx="9" cy="11" r="5" fill="#888" opacity=".7"/><circle cx="5" cy="15" r="4" fill="#666" opacity=".7"/></svg></button>
        <button class="vb on" aria-label="Anti-aliasing"><svg viewBox="0 0 20 20"><path fill="none" stroke="#20333f" stroke-width="5" d="M8 2a8 8 0 0 0 0 16M12 2a8 8 0 0 1 0 16"/><path fill="none" stroke="#e8e8e8" stroke-width="2" d="M8 4q-7 6 0 12M12 4q7 6 0 12"/></svg></button>
        <button class="vb dk" aria-label="Depth of field"><svg viewBox="0 0 20 20"><path fill="#34504b" d="M6 4h10v13H6z"/></svg></button>
        <i class="vs"></i>
        <button class="vb" aria-label="Isolate select"><svg viewBox="0 0 20 20"><path class="st" stroke-dasharray="2 2" d="M2 2h12v12H2z"/><use href="#ptr" x="9" y="5" width="10" height="15"/></svg></button>
        <i class="vs"></i>
        <button class="vb" aria-label="X-ray"><svg viewBox="0 0 20 20"><path class="sg" d="M7 3h11v10H7zM2 7h11v11H2z"/><path class="fg" d="M7 7h6v6H7z"/></svg></button>
        <button class="vb" aria-label="X-ray active"><svg viewBox="0 0 20 20"><path class="sg" d="M7 3h11v10H7z"/><path class="fg" d="M2 7h12v11H2z"/></svg></button>
        <button class="vb" aria-label="X-ray joints"><svg viewBox="0 0 20 20"><path class="sg" d="M3 2h14v16H3zM6 5l8 9"/></svg></button>
        <i class="vs"></i>
        <button class="vb" aria-label="Exposure"><svg viewBox="0 0 20 20"><circle class="sg w4" stroke-dasharray="6 2" cx="10" cy="10" r="6"/></svg></button>
        <input class="num" value="0.00" aria-label="Exposure value">
        <button class="vb" aria-label="Gamma"><svg viewBox="0 0 20 20"><path class="fg" d="M10 2h7v16h-7z"/><circle cx="9" cy="10" r="5" fill="#444"/><path class="fg" d="M8 5a5 5 0 0 0 0 10z"/></svg></button>
        <input class="num" value="1.00" aria-label="Gamma value">
        <button class="vb on" aria-label="Color management"><svg viewBox="0 0 20 20"><circle fill="#3e98a6" stroke="#1d3a44" stroke-width="2" cx="10" cy="10" r="9"/><path fill="none" stroke="#16323a" stroke-width="1.500" d="M5 8h3v5H5zM11 13V8l4 5V8"/></svg></button>
        <span class="sel gamma"><select aria-label="View transform"><option>sRGB gamma</option></select></span>
      </div>
      <div class="canvas">
        <svg id="scene" class="scene">
          <g id="grid"></g>
          <use href="#ball" x="454" y="425" width="40" height="40"/>
          <use href="#ball" x="543" y="430" width="40" height="40"/>
          <use href="#ball" x="633" y="435" width="40" height="40"/>
          <use href="#ball" x="725" y="440" width="40" height="40"/>
        </svg>
        <svg class="axis" viewBox="0 0 34 42" width="34" height="42"><path d="M9 6v24" stroke="#3fd64a" stroke-width="2"/><path d="M9 0l4 7H5z" fill="#3fd64a"/><path d="M9 30l17 4" stroke="#c62020" stroke-width="2"/><path d="M26 20l5 8M31 20l-5 8" stroke="#d01010" stroke-width="2"/><path d="M3 31h6l-5 7h5" stroke="#1010d8" stroke-width="2" fill="none"/></svg>
        <span class="camname">persp</span>
      </div>
    </section>

    <section class="channel">
      <div class="chicons">
        <svg viewBox="0 0 20 20"><path fill="#7aa83c" d="M10 0l4 7H6z"/><path class="sg" d="M10 7v6l-5 4M10 13l5 4"/><path fill="#3c6fd0" d="M1 13l6 6H0z"/><path fill="#cf4a4a" d="M14 19l6-7v7z"/></svg>
        <svg viewBox="0 0 20 20"><path class="st w6" d="M5 17Q1 5 10 5q8 0 6 8"/><circle cx="15" cy="15" r="4" fill="#777"/></svg>
        <svg viewBox="0 0 20 20"><path fill="none" stroke="#888" stroke-width="2" d="M3 1v17h16"/><path class="st" d="M5 15L16 5"/><path class="ft" d="M10 2h9v9z"/></svg>
      </div>
      <nav class="menus ch-menus"><button>Channels</button><button>Edit</button><button>Object</button><button>Show</button></nav>
      <div class="chname">row1</div>
      <div class="chrows">
        <label for="c1">Translate X</label><input id="c1" value="0">
        <label for="c2">Translate Y</label><input id="c2" value="0">
        <label for="c3">Translate Z</label><input id="c3" value="0">
        <label for="c4">Rotate X</label><input id="c4" value="0">
        <label for="c5">Rotate Y</label><input id="c5" class="keyed" value="0">
        <label for="c6">Rotate Z</label><input id="c6" value="0">
        <label for="c7">Scale X</label><input id="c7" value="1">
        <label for="c8">Scale Y</label><input id="c8" value="1">
        <label for="c9">Scale Z</label><input id="c9" value="1">
        <label for="c10">Visibility</label><input id="c10" class="soft" value="on">
      </div>
      <div class="chvoid"></div>
      <i class="dots"></i>
      <div class="layers">
        <div class="ptab"><button class="cur">Display</button><button>Anim</button></div>
        <nav class="menus lay-menus"><button>Layers</button><button>Options</button><button>Help</button></nav>
        <div class="layicons">
          <svg viewBox="0 0 20 16"><path class="fg" d="M0 9l8-6 6 4v6l-5 2z"/><path class="ft" d="M15 2l5 5h-3v7h-4V7h-3z"/></svg>
          <svg viewBox="0 0 20 16"><path class="fg" d="M0 8l8-6 6 4v6l-5 2z"/><path class="ft" d="M15 14l5-5h-3V2h-4v7h-3z"/></svg>
          <svg class="wide" viewBox="0 0 20 16"><path class="fg" d="M0 10l10-6 8 5-9 7z"/><path class="st w3" d="M16 0v8M12 4h8"/></svg>
          <svg viewBox="0 0 20 16"><path class="fg" d="M0 10l10-6 8 5-9 7z"/><circle class="ft" cx="15" cy="5" r="5"/></svg>
        </div>
        <div class="laylist"></div>
        <div class="hscroll"><i class="al"></i><i class="thumb"></i><i class="ar"></i></div>
      </div>
    </section>
    <nav class="sidetabs"><button class="cur t1">Channel Box / Layer Editor</button><button class="t2">Modeling Toolkit</button><button class="t3">Attribute Editor</button></nav>
  </div>

  <div class="timerow">
    <i class="grip tall"></i>
    <div class="timeline">
      <ol><li>0</li><li>10</li><li>20</li><li>30</li><li>40</li><li>50</li><li>60</li><li>70</li><li>80</li><li>90</li><li>100</li><li>110</li><li>120</li><li>130</li><li>140</li><li>150</li><li>160</li><li>170</li><li>180</li><li>190</li><li>200</li><li>210</li><li>220</li><li>230</li><li>240</li><li>250</li><li>260</li><li>270</li><li>280</li><li>290</li><li>300</li><li>310</li><li>320</li><li>330</li><li>340</li><li>3</li></ol>
      <span class="playhead">1</span>
    </div>
    <input class="field curframe" value="1" aria-label="Current frame">
    <div class="play">
      <button aria-label="Go to start"><svg viewBox="0 0 24 24"><path class="fg" d="M2 3h3v18H2zM13 5v14l-8-7zM22 5v14l-8-7z"/></svg></button>
      <button aria-label="Step back frame"><svg viewBox="0 0 24 24"><path class="fg" d="M4 3h3v18H4zM19 4v16L8 12z"/></svg></button>
      <button aria-label="Step back key"><svg viewBox="0 0 24 24"><path class="sg" d="M7 0v24"/><path class="fo" d="M5 3h4v18H5z"/><path class="fg" d="M20 4v16l-9-8z"/></svg></button>
      <button aria-label="Play backwards"><svg viewBox="0 0 24 24"><path class="fg" d="M20 2v20L4 12z"/></svg></button>
      <button aria-label="Play forwards"><svg viewBox="0 0 24 24"><path class="fg" d="M4 2v20l16-10z"/></svg></button>
      <button aria-label="Step forward key"><svg viewBox="0 0 24 24"><path class="sg" d="M18 0v24"/><path class="fo" d="M16 3h4v18h-4z"/><path class="fg" d="M4 4v16l10-8z"/></svg></button>
      <button aria-label="Step forward frame"><svg viewBox="0 0 24 24"><path class="fg" d="M17 3h3v18h-3zM5 4v16l11-8z"/></svg></button>
      <button aria-label="Go to end"><svg viewBox="0 0 24 24"><path class="fg" d="M20 3h3v18h-3zM2 5v14l8-7zM11 5v14l8-7z"/></svg></button>
    </div>
  </div>

  <div class="rangerow">
    <i class="grip tall"></i>
    <input class="field" value="1" aria-label="Animation start"><input class="field" value="1" aria-label="Playback start">
    <div class="rangetrack"><div class="range"><i></i><span>1</span><span class="end">349</span><i></i></div></div>
    <input class="field" value="349" aria-label="Playback end"><input class="field" value="360" aria-label="Animation end">
    <i class="vs"></i><i class="tri hollow"></i>
    <button class="box cset">No Character Set</button>
    <i class="tri hollow"></i>
    <button class="box alay">No Anim Layer</button>
    <i class="vs"></i>
    <span class="sel fps"><select aria-label="Playback speed"><option>30 fps</option></select></span>
    <button class="rb" aria-label="Loop"><svg viewBox="0 0 24 24"><path class="sg w3" d="M3 13V7h14M21 10v7H7"/><path class="fg" d="M15 1l8 6-8 5zM9 12v10l-8-5z"/></svg></button>
    <i class="vs"></i>
    <button class="rb key" aria-label="Auto keyframe"><svg viewBox="0 0 24 24"><path class="sg" d="M4 8q2-7 9-6 6 1 7 6M3 14q1 7 8 8 7 0 9-6"/><path class="so w3" d="M12 5v14M8 12h8"/></svg></button>
    <button class="rb prefs" aria-label="Preferences"><svg viewBox="0 0 24 24"><circle class="sg" cx="5" cy="6" r="4" stroke-dasharray="3 1"/><circle class="fo" cx="18" cy="5" r="3"/><path class="so w3" d="M10 9l7 1-3 7 5 2v5M14 16l-4 6H6M17 10l5 3"/></svg></button>
  </div>

  <div class="cmdrow">
    <i class="grip tall"></i>
    <label for="mel">MEL</label><input id="mel" class="field mel"><i class="grip mini"></i>
    <output class="result">Undo: duplicateSpecialCallback OptionBoxWindow|formLayout390|tabLayout11|formLayout392|tabLayout12|columnLayout1251 1</output>
    <button class="rb" aria-label="Script editor"><svg viewBox="0 0 24 24"><path class="fg" d="M1 0h22v3H1zM1 5h22v19H1z"/><path class="sd" d="M8 9q-3 0-2 3l-2 2 2 2q-1 4 2 4M16 9q3 0 2 3l2 2-2 2q1 4-2 4M12 11v2M12 16v3"/></svg></button>
  </div>

  <footer class="helprow"><i class="grip tall"></i><span>Select Tool: select an object</span><svg viewBox="0 0 16 18" width="16" height="18"><path stroke="#999" stroke-width="1.500" d="M1 17L15 2M6 17l9-10M11 17l4-5"/></svg></footer>
</main>

<section class="dialog" role="dialog" aria-label="Duplicate Special Options">
  <div class="dtitle"><i class="r"></i><i class="y"></i><i class="g"></i><h2>Duplicate Special Options</h2></div>
  <nav class="menus d-menus"><button>Edit</button><button>Help</button></nav>
  <form class="dbody">
    <div class="drow off"><span>Geometry type:</span><label><input type="radio" name="geo" checked disabled>Copy</label></div>
    <div class="drow off"><span></span><label><input type="radio" name="geo" disabled>Instance</label></div>
    <div class="drow push"><span>Group under:</span><label><input type="radio" name="grp" checked>Parent</label></div>
    <div class="drow"><span></span><label><input type="radio" name="grp">World</label></div>
    <div class="drow"><span></span><label><input type="radio" name="grp">New group</label></div>
    <hr>
    <div class="drow c off"><span></span><label><input type="checkbox" disabled>Smart transform</label></div>
    <div class="drow v off"><span>Translate:</span><input disabled value="0.0000" aria-label="Translate X"><input disabled value="0.0000" aria-label="Translate Y"><input disabled value="0.0000" aria-label="Translate Z"></div>
    <div class="drow v off"><span>Rotate:</span><input disabled value="0.0000" aria-label="Rotate X"><input disabled value="0.0000" aria-label="Rotate Y"><input disabled value="60.0000" aria-label="Rotate Z"></div>
    <div class="drow v off"><span>Scale:</span><input disabled value="1.0000" aria-label="Scale X"><input disabled value="1.0000" aria-label="Scale Y"><input disabled value="1.0000" aria-label="Scale Z"></div>
    <div class="drow v"><label class="lab" for="copies">Number of copies:</label><input id="copies" value="5"><input type="range" min="0" max="100" value="5" aria-label="Number of copies slider"></div>
    <hr>
    <div class="drow c off"><span></span><label><input type="checkbox" disabled>Duplicate input graph</label></div>
    <div class="drow c"><span></span><label><input type="checkbox" checked>Duplicate input connections</label></div>
    <div class="drow c"><span></span><label><input type="checkbox" class="hover">Instance leaf nodes</label></div>
    <hr>
    <div class="drow c"><span></span><label><input type="checkbox">Assign unique name to children nodes</label></div>
    <svg class="cursor" viewBox="0 0 16 26" width="16" height="26"><path fill="#fff" stroke="#222" d="M1 1v20l4-4 4 8 3-2-3-7h6z"/></svg>
  </form>
  <div class="dbtns"><button>Duplicate Special</button><button>Apply</button><button>Close</button></div>
</section>
<script src="scene.js"></script>
</body>
</html>
```

FILE: scene.js
```js
// Ground plane: project a 20 x 20 cell grid through a homography.
// Corners are those of its left half, clockwise from the far left.
const p = [[630, 363], [826, 373], [768, 580], [518, 564]];
const dx1 = p[1][0] - p[2][0], dx2 = p[3][0] - p[2][0], sx = p[0][0] - p[1][0] + p[2][0] - p[3][0];
const dy1 = p[1][1] - p[2][1], dy2 = p[3][1] - p[2][1], sy = p[0][1] - p[1][1] + p[2][1] - p[3][1];
const det = dx1 * dy2 - dx2 * dy1;
const g = (sx * dy2 - dx2 * sy) / det, h = (dx1 * sy - sx * dy1) / det;
const a = p[1][0] - p[0][0] + g * p[1][0], b = p[3][0] - p[0][0] + h * p[3][0];
const d = p[1][1] - p[0][1] + g * p[1][1], e = p[3][1] - p[0][1] + h * p[3][1];

function project(u, v) {
  const w = g * u + h * v + 1;
  return [(a * u + b * v + p[0][0]) / w, (d * u + e * v + p[0][1]) / w];
}

function line(from, to, heavy) {
  const el = document.createElementNS('http://www.w3.org/2000/svg', 'line');
  el.setAttribute('x1', from[0]);
  el.setAttribute('y1', from[1]);
  el.setAttribute('x2', to[0]);
  el.setAttribute('y2', to[1]);
  el.setAttribute('class', heavy ? 'gl heavy' : 'gl');
  document.getElementById('grid').appendChild(el);
}

for (let i = 0; i <= 20; i++) {
  line(project(i / 10, 0), project(i / 10, 1), i === 10);
  line(project(0, i / 20), project(2, i / 20), i === 10);
}
```

FILE: styles.css
```css
* { box-sizing: border-box; }
html { height: 100%; }
body {
  margin: 0; min-height: 100%; display: flex; flex-direction: column; position: relative;
  overflow: hidden; background: linear-gradient(#5f5f5f, #747474 20%, #7a7a7a);
  font: 500 14px/20px "Open Sans", "Noto Sans", sans-serif; color: #d4d4d4;
}
button, input, select { font: inherit; color: inherit; border: 0; margin: 0; padding: 0; background: none; outline: 0; border-radius: 0; }
button { white-space: nowrap; }
i { display: block; flex: none; font-style: normal; }
svg { display: block; flex: none; }
h1, h2, ul, ol { margin: 0; padding: 0; list-style: none; }
.defs { position: absolute; width: 0; height: 0; }

/* icon paints */
.fg { fill: #c6c6c6; } .ft { fill: #4cb4c0; } .fo { fill: #e39850; } .fe { fill: #5fb48b; } .fd { fill: #3a3a3a; }
.sg, .st, .so, .se, .sd { fill: none; stroke-width: 2; }
.sg { stroke: #c6c6c6; } .st { stroke: #4cb4c0; } .so { stroke: #e39850; } .se { stroke: #5fb48b; }
.sd { stroke: #3d3832; stroke-width: 1.5; }
.box6 { fill: #444; stroke: #e39850; stroke-width: 2; }
.w1 { stroke-width: 1; } .w3 { stroke-width: 3; } .w4 { stroke-width: 4; } .w6 { stroke-width: 6; } .w8 { stroke-width: 8; }

/* macOS menu bar */
.macbar { display: flex; align-items: center; height: 29px; flex: none; padding-top: 1px; background: #e3e3e4; color: #1c1c1c; border-bottom: 2px solid #4c4c4c; font: 500 17px/26px Inter, sans-serif; }
.apple { width: 18px; height: 20px; margin-left: 26px; fill: #222; }
.mac-app { font-weight: 700; margin-left: 24px; }
.mac-menu { margin-left: 23px; font-weight: 400; }
.mac-status { display: flex; align-items: center; margin-left: auto; margin-right: 28px; font-weight: 400; }
.clock { margin-left: 22px; }
.s2 { margin-left: 9px; } .s3 { margin-left: 10px; } .s4 { margin-left: 18px; } .s5 { margin-left: 21px; }
.s6 { margin-left: 13px; } .s7 { margin-left: 12px; } .s8 { margin-left: 15px; } .s9 { margin-left: 31px; } .s10 { margin-left: 18px; }

.desktop-labels { color: #dcdcdc; font-weight: 600; }
.desktop-labels span { position: absolute; right: 11px; }
.d1 { top: 272px; } .d2 { top: 408px; } .d3 { top: 551px; } .desktop-labels .d4 { top: 994px; right: 18px; }

/* application window */
.app { flex: 1; margin: 0 22px 7px 3px; display: flex; flex-direction: column; position: relative; background: #444; border-radius: 6px 6px 8px 8px; box-shadow: 0 4px 16px rgba(0,0,0,.45); }
.titlebar { display: flex; align-items: center; gap: 9px; height: 28px; padding-left: 9px; background: linear-gradient(#ececec, #cdcdcd); border-radius: 6px 6px 0 0; border-bottom: 1px solid #b4b4b4; color: #3a3a3a; }
.titlebar h1 { flex: 1; text-align: center; font: 400 16px/26px Inter, sans-serif; margin-right: 87px; }
.light { width: 16px; height: 16px; border-radius: 50%; border: 2px solid #b0b0b0; background: #d2d2d2; }
.mod { background: radial-gradient(#555 2px, #d2d2d2 3px); }
.menus { display: flex; }
.menurow { display: flex; height: 33px; align-items: flex-start; padding-right: 4px; }
.main-menus { gap: 20px; padding-left: 10px; margin-right: auto; line-height: 25px; }
.ws-label { margin: 7px 11px 0 0; color: #bdbdbd; }
.sel { display: flex; position: relative; background: #5d5d5d; border-radius: 2px; }
.sel select, .sel input { appearance: none; flex: 1; min-width: 0; padding: 0 22px 0 4px; }
.sel::before { content: ""; position: absolute; right: 24px; top: 0; bottom: 0; width: 1px; background: #4b4b4b; }
.sel::after { content: ""; position: absolute; right: 7px; top: 50%; margin-top: -4px; border: 6px solid transparent; border-top: 8px solid #cfcfcf; border-bottom: 0; pointer-events: none; }
.ws { width: 248px; height: 24px; margin-top: 4px; }
.lock { width: 28px; height: 30px; margin: 2px 0 0 4px; background: #303030; display: grid; place-items: center; }
.br { position: relative; }
.br::before, .br::after { content: ""; position: absolute; top: 0; bottom: 0; width: 8px; border: 2px solid #3f9f3f; }
.br::before { left: 0; border-right: 0; }
.br::after { right: 0; border-left: 0; }

.grip { width: 6px; height: 30px; margin: 0 6px 0 3px; background: radial-gradient(#777 1px, transparent 1px) 0 0 / 3px 4px; }
.grip.tall { align-self: stretch; height: auto; margin-top: 3px; margin-bottom: 3px; }
.statusline { display: flex; align-items: center; height: 36px; border-bottom: 2px solid #333; padding-right: 3px; }
.mode { width: 124px; height: 25px; margin-left: 2px; margin-right: 7px; }
.vs { width: 14px; height: 26px; background: linear-gradient(90deg, transparent 6px, #8a8a8a 6px, #8a8a8a 8px, transparent 8px), linear-gradient(#8a8a8a, #8a8a8a) 5px 6px / 4px 14px no-repeat; }
.statusline .vs { margin-right: 6px; }
.gt { width: 8px; height: 26px; background: #777; clip-path: polygon(0 0, 2px 0, 8px 50%, 2px 100%, 0 100%); margin: 0 18px 0 8px; }
.ib { width: 29px; height: 29px; flex: none; display: grid; place-items: center; }
.ib svg { width: 24px; height: 25px; }
.on { background: #5285a6; }
.dim { opacity: .25; }
.tri { width: 10px; height: 7px; background: #999; clip-path: polygon(0 0, 100% 0, 50% 100%); margin: 0 8px 0 4px; }
.tri.sp { margin: 0 8px 0 9px; }
.tri.hollow { width: 12px; height: 8px; background: #777; margin: 16px 10px 0; align-self: flex-start; }
.box { border: 2px solid #3b3b3b; border-radius: 3px; height: 28px; padding: 0 4px; text-align: left; background: #424242; overflow: hidden; }
.live { width: 123px; margin-right: 5px; } .sym { width: 123px; }
.user { display: flex; align-items: center; height: 28px; padding: 0 2px 0 6px; gap: 6px; background: #505050; color: #e6e6e6; width: 149px; }
.user .tri { margin: 0; background: #bbb; }
.right-tools { display: flex; margin-left: auto; }

/* shelf */
.shelf { display: flex; height: 89px; padding-top: 4px; border-bottom: 3px solid #383838; }
.shelf-side { width: 25px; margin: 2px 0 5px 2px; background: #353535; display: flex; flex-direction: column; align-items: center; gap: 28px; padding-top: 14px; }
.shelf-main { flex: 1; min-width: 0; margin-left: 3px; }
.shelf-tabs { display: flex; gap: 2px; height: 23px; padding: 3px 0 0 1px; background: #373737; }
.shelf-tabs button { padding: 0 14px; background: #3b3b3b; border: 1px solid #323232; border-bottom: 0; color: #9a9a9a; }
.shelf-tabs .cur, .ptab .cur { background: #444; border-color: #444; color: #f2f2f2; font-weight: 600; }
.shelf-icons { display: flex; align-items: center; padding: 0 0 0 6px; height: 53px; }
.shelf-icons button { width: 44px; height: 43px; flex: none; display: grid; place-items: center; }
.shelf-icons svg { width: 32px; height: 32px; overflow: visible; }
.shelf-icons .bar { width: 2px; height: 43px; background: #999; margin: 0 6px; }
.tee { font: 700 42px/40px "Liberation Serif", serif; color: #e39850; }
.svgchip { display: grid; place-items: center; width: 29px; height: 28px; background: #e39850; color: #3c3630; font: 700 14px/20px "Open Sans", sans-serif; padding-bottom: 4px; }
.tinyt { font: 700 13px "Open Sans", sans-serif; fill: #4cb4c0; }
.shelf-scroll { width: 16px; height: 44px; margin: 27px 9px 0 0; background: #353535; display: flex; flex-direction: column; align-items: center; justify-content: space-between; padding: 4px 0; }
.knob { width: 13px; height: 13px; border-radius: 50%; background: #606060; }
.au, .ad { width: 12px; height: 7px; background: #c4c4c4; clip-path: polygon(0 100%, 50% 0, 100% 100%); }
.ad { clip-path: polygon(0 0, 100% 0, 50% 100%); }
.al, .ar { width: 7px; height: 11px; background: #c4c4c4; clip-path: polygon(100% 0, 0 50%, 100% 100%); }
.ar { clip-path: polygon(0 0, 100% 50%, 0 100%); }

/* work area */
.work { flex: 1; display: flex; min-height: 0; }
.toolbox { width: 55px; border-right: 2px solid #383838; display: flex; flex-direction: column; align-items: center; }
.hgrip { width: 48px; height: 8px; margin: 3px 0 4px; background: radial-gradient(#777 1px, transparent 1px) 0 0 / 4px 4px; }
.tb { width: 45px; height: 46px; flex: none; display: grid; place-items: center; }
.tb svg { width: 36px; height: 36px; }
.tgap { height: 49px; } .tline { width: 45px; height: 3px; background: #8c8c8c; margin: 5px 0 8px; }
.mlogo { margin-top: auto; margin-bottom: 10px; }
.outliner { width: 336px; display: flex; flex-direction: column; padding: 2px 6px 7px 4px; border-right: 2px solid #383838; margin-right: 3px; }
.ptab { display: flex; background: #373737; height: 20px; }
.ptab button { padding: 0 15px 0 11px; color: #9a9a9a; border: 1px solid #323232; }
.out-menus { gap: 20px; padding: 4px 0 0 12px; }
.searchrow { display: flex; align-items: center; gap: 8px; padding: 10px 1px 0 9px; }
.search { flex: 1; height: 22px; background: #2b2b2b; }
.search::before { display: none; }
.search input::placeholder { color: #8c8c8c; opacity: 1; }
.treewrap { flex: 1; display: flex; background: #373737; margin: 4px 0 0 3px; }
.tree { flex: 1; }
.tree li { display: flex; align-items: center; height: 25px; gap: 5px; padding-left: 43px; position: relative; }
.tree svg { width: 20px; height: 20px; }
.tree .dimmed { color: #707070; }
.tree .picked { background: #5285a6; color: #fff; font-weight: 600; }
.plus { position: absolute; left: 26px; top: 7px; width: 11px; height: 11px; border: 1px solid #7395aa; background: linear-gradient(#8fa9b8, #8fa9b8) 4px 1px / 1px 7px no-repeat, linear-gradient(#8fa9b8, #8fa9b8) 1px 4px / 7px 1px no-repeat; }
.vscroll { width: 14px; background: #383838; display: flex; flex-direction: column; align-items: center; padding: 4px 0; gap: 6px; margin-left: 2px; }
.vscroll .thumb { flex: 1; width: 13px; border-radius: 6px; background: #5e5e5e; }
.hscroll { display: flex; align-items: center; gap: 5px; height: 14px; margin-left: 3px; padding: 0 3px; background: #383838; }
.hscroll .thumb { height: 13px; border-radius: 6px; background: #5e5e5e; flex: 1; }
.outliner .hscroll { padding-right: 21px; }
.dots { width: 108px; height: 3px; margin: 2px auto 0; background: radial-gradient(#888 1px, transparent 1px) 0 0 / 4px 3px; }

.viewport { flex: 1; min-width: 0; display: flex; flex-direction: column; margin: 4px 4px 4px 0; border: 1px solid #868686; }
.view-menus { gap: 20px; padding: 0 0 0 10px; height: 24px; }
.view-menus button { height: 23px; }
.viewbar { display: flex; align-items: center; height: 24px; }
.viewbar .vs { height: 20px; margin-left: -1px; }
.vb { width: 22px; height: 23px; margin: 0 1px; flex: none; display: grid; place-items: center; }
.vb svg { width: 18px; height: 19px; }
.dk { background: #3a3a3a; }
.num { width: 46px; height: 18px; background: #2b2b2b; padding-left: 5px; margin: 0 3px; border-radius: 2px; }
.gamma { width: 210px; height: 22px; margin-left: 3px; }
.canvas { flex: 1; background: #a1a1a1; position: relative; overflow: hidden; }
.scene { position: absolute; inset: 0; width: 100%; height: 100%; }
.gl { stroke: #454545; stroke-width: 1; }
.heavy { stroke: #303030; stroke-width: 2; }
.axis { position: absolute; left: 24px; bottom: 22px; }
.camname { position: absolute; bottom: 4px; left: 0; right: 14px; text-align: center; color: #fff; font-size: 12px; font-weight: 700; }

/* channel box */
.channel { width: 331px; display: flex; flex-direction: column; border-left: 2px solid #383838; padding-bottom: 7px; }
.chicons { display: flex; gap: 8px; justify-content: flex-end; padding: 4px 8px 0 0; }
.chicons svg { width: 18px; height: 18px; }
.ch-menus { gap: 20px; padding: 9px 0 0 14px; }
.chname { padding: 5px 0 0 8px; }
.chrows { display: grid; grid-template-columns: 1fr 92px; column-gap: 8px; margin-right: 7px; }
.chrows label { text-align: right; height: 20px; color: #c4c4c4; line-height: 20px; }
.chrows input { height: 19px; width: 92px; background: #2b2b2b; padding-left: 11px; }
.chrows .keyed { border-left: 9px solid #d22d2d; padding-left: 2px; }
.chrows .soft { background: #373737; }
.chvoid { flex: 1; background: #2b2b2b; margin: 21px 5px 0 9px; }
.channel .dots { margin: 3px 140px 9px auto; }
.layers { margin: 0 5px 0 6px; border: 1px solid #383838; border-top: 0; padding: 0 3px 3px; }
.layers .ptab { height: 22px; }
.layers .ptab button { padding: 0 14px; }
.layers .ptab .cur { padding-left: 8px; }
.lay-menus { gap: 20px; padding: 2px 0 0 8px; }
.layicons { display: flex; gap: 12px; justify-content: flex-end; padding: 9px 7px 13px; }
.layicons svg { width: 18px; height: 15px; }
.layicons .wide { margin-left: 4px; }
.laylist { height: 168px; background: #2b2b2b; }
.layers .hscroll { margin: 0; }
.layers .hscroll .thumb { flex: 0 0 193px; }
.layers .hscroll .ar { margin-left: auto; }
.sidetabs { width: 20px; display: flex; flex-direction: column; background: #363636; margin-top: 1px; }
.sidetabs button { writing-mode: vertical-rl; width: 20px; color: #8a8a8a; border: 1px solid #2f2f2f; border-width: 0 0 1px; background: #3a3a3a; line-height: 20px; }
.sidetabs .cur { background: #444; color: #d6d6d6; }
.t1 { height: 207px; } .t2 { height: 146px; } .t3 { height: 132px; }

/* time controls */
.timerow, .rangerow, .cmdrow, .helprow { display: flex; align-items: center; border-top: 2px solid #363636; flex: none; }
.timerow { height: 48px; }
.timeline { flex: 1; height: 36px; background: #2b2b2b; position: relative; align-self: flex-start; margin-top: 4px; }
.timeline ol { display: grid; grid-template-columns: repeat(35, 1fr) 8px; padding-left: 5px; height: 36px; }
.timeline li { color: #7e7e7e; line-height: 16px; padding-left: 1px; background: linear-gradient(#8a8a8a, #8a8a8a) 0 17px / 2px 19px no-repeat; }
.playhead { position: absolute; left: 9px; top: 0; height: 36px; border-left: 3px solid #c02b2b; color: #fff; padding-top: 16px; padding-left: 1px; font-weight: 600; }
.field { width: 110px; height: 29px; background: #2b2b2b; border-radius: 3px; padding-left: 7px; flex: none; }
.curframe { height: 23px; margin-left: 10px; align-self: flex-start; margin-top: 12px; }
.play { display: flex; margin: 0 11px 0 8px; }
.play button { width: 29px; display: grid; place-items: center; }
.play svg { width: 22px; height: 22px; }
.rangerow { height: 44px; }
.rangerow .field { margin: 0 8px 0 2px; }
.rangetrack { flex: 1; height: 29px; background: #383838; padding: 2px 47px 3px 6px; margin: 0 6px 0 -1px; }
.range { display: flex; align-items: center; gap: 5px; height: 24px; background: #5e5e5e; border-radius: 5px; padding: 0 4px; }
.range i { width: 17px; height: 16px; border-radius: 5px; background: #929292; }
.range .end { margin-left: auto; }
.rangerow .vs { margin-left: -1px; }
.rangerow .field + .vs { margin-left: -5px; }
.cset, .alay { width: 126px; height: 29px; }
.cset { margin-right: 3px; }
.alay { margin-right: 8px; }
.fps { width: 126px; height: 25px; margin: 0 12px 4px 10px; }
.rb { width: 30px; height: 28px; flex: none; display: grid; place-items: center; }
.rb svg { width: 22px; height: 24px; }
.rangerow .rb { margin-right: 6px; }
.rangerow .key { margin: 0 0 0 5px; }
.rangerow .prefs { margin: 0 12px 0 7px; }
.cmdrow { height: 42px; }
.cmdrow label { width: 58px; padding-left: 15px; color: #e4e4e4; font-weight: 600; }
.mel { width: 518px; height: 28px; }
.grip.mini { height: 12px; margin: 0 2px; width: 6px; }
.result { flex: 1; height: 30px; background: #2b2b2b; line-height: 32px; padding-left: 8px; color: #dcdcdc; white-space: nowrap; overflow: hidden; }
.cmdrow .rb { margin: 0 8px 0 4px; }
.helprow { height: 33px; }
.helprow span { flex: 1; padding-left: 14px; color: #c0c0c0; }
.helprow svg { align-self: flex-end; margin: 0 2px 2px 0; }

/* floating option window */
.dialog { position: absolute; left: 1359px; top: 383px; width: 682px; background: #444; border-radius: 7px 7px 8px 8px; box-shadow: 0 22px 50px rgba(0,0,0,.6), 0 0 2px #222; padding-bottom: 6px; }
.dtitle { display: flex; align-items: center; gap: 10px; height: 28px; padding-left: 10px; border-radius: 7px 7px 0 0; background: linear-gradient(#ececec, #cecece); color: #333; }
.dtitle i { width: 15px; height: 15px; border-radius: 50%; }
.r { background: #f9524a; } .y { background: #fab11e; } .g { background: #21bf32; }
.dtitle h2 { flex: 1; text-align: center; font: 400 16px/26px Inter, sans-serif; margin-right: 84px; }
.d-menus { gap: 20px; padding: 0 0 0 11px; height: 26px; }
.d-menus button { height: 25px; }
.dbody { margin: 0 5px 0 4px; height: 474px; border: 3px double #383838; border-top: 0; padding: 10px 5px 0 3px; position: relative; }
.drow { display: grid; grid-template-columns: 208px 1fr; height: 23px; align-items: center; column-gap: 8px; }
.drow > span, .lab { text-align: right; }
.drow label:not(.lab) { display: flex; align-items: center; gap: 9px; }
.push { margin-top: 2px; }
.off { color: #868686; }
.dbody hr { border: 0; height: 2px; background: #373737; margin: 2px 0; }
.dbody input[type=radio] { appearance: none; width: 12px; height: 12px; border-radius: 50%; background: #2b2b2b; }
.dbody input[type=radio]:checked { background: radial-gradient(#d8d8d8 3px, #2b2b2b 4px); }
.dbody input[type=radio]:disabled:checked { background: radial-gradient(#7c7c7c 3px, #2b2b2b 4px); }
.dbody input[type=checkbox] { appearance: none; width: 17px; height: 17px; background: #2b2b2b; display: grid; place-items: center; }
.drow.c label { gap: 6px; }
.drow.c { height: 24px; }
.dbody input[type=checkbox]:checked::after { content: ""; width: 6px; height: 11px; border: solid #eee; border-width: 0 3px 3px 0; transform: rotate(40deg); margin-top: -3px; }
.dbody .hover { border: 2px solid #5b7f9b; box-shadow: inset 0 0 2px #5285a6; }
.drow.v { grid-template-columns: 208px 98px 98px 98px; height: 28px; column-gap: 4px; }
.drow.v > :nth-child(n+2) { margin-left: 4px; }
.drow.v input:not([type=range]) { width: 98px; height: 22px; background: #414141; padding-left: 7px; color: #727272; }
.drow.v #copies { background: #2b2b2b; color: #ddd; }
.drow.v input[type=range] { appearance: none; width: 334px; height: 18px; }
input[type=range]::-webkit-slider-runnable-track { height: 4px; border-radius: 2px; background: #2b2b2b; }
input[type=range]::-webkit-slider-thumb { appearance: none; width: 9px; height: 17px; margin-top: -6px; border-radius: 2px; background: #bcbcbc; }
.cursor { position: absolute; left: 236px; top: 327px; }
.dbtns { display: flex; gap: 5px; padding: 8px 7px 0; }
.dbtns button { flex: 1; height: 35px; background: #5d5d5d; color: #ececec; border-radius: 2px; }
```
